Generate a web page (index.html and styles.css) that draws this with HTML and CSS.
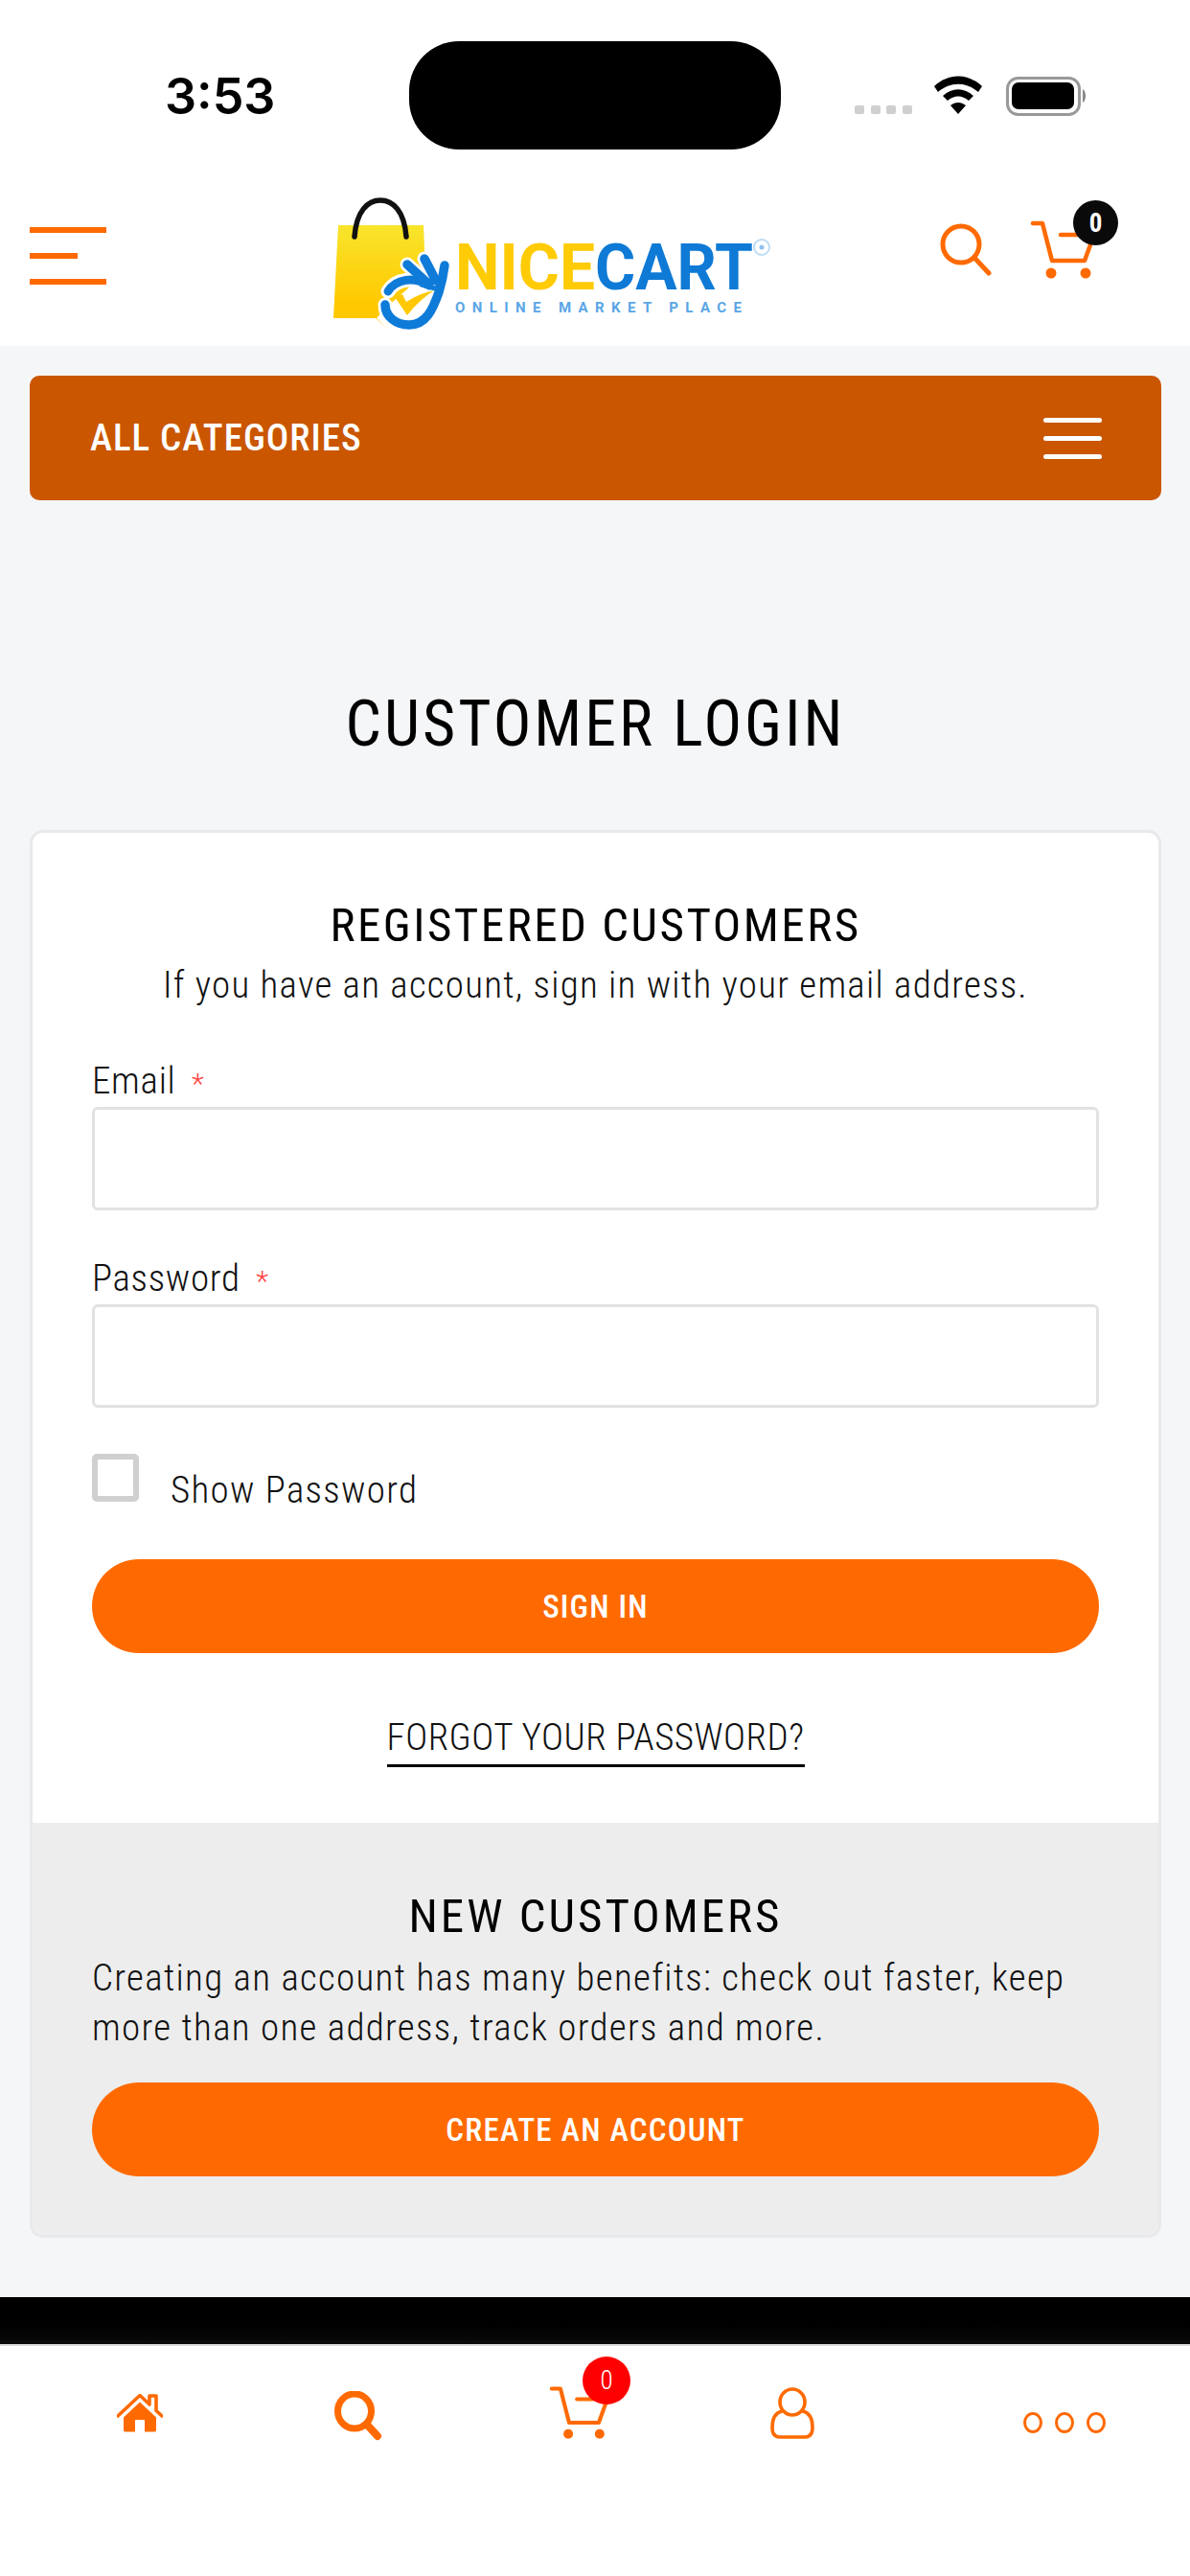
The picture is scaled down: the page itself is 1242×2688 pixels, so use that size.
FILE: index.html
```html
<!DOCTYPE html>
<html lang="en">
<head>
<meta charset="utf-8">
<title>Customer Login</title>
<link rel="stylesheet" href="styles.css">
</head>
<body>
<div class="top">
  <div class="status">
    <div class="time">3:53</div>
    <div class="island"></div>
    <svg class="status-icons" viewBox="880 70 260 60" width="260" height="60">
      <g fill="#cfcfcf">
        <rect x="892" y="110" width="10" height="9" rx="2"/>
        <rect x="909" y="110" width="10" height="9" rx="2"/>
        <rect x="925" y="110" width="10" height="9" rx="2"/>
        <rect x="942" y="110" width="10" height="9" rx="2"/>
      </g>
      <path d="M975 90 C990 76 1010 76 1025 90 L1021 96 C1008 85 992 85 979 96Z M984 100 C994 91 1006 91 1016 100 L1011 105 C1004 99 996 99 989 105Z M992 110 C997 106 1003 106 1008 110 L1000 119Z" fill="#000"/>
      <rect x="1051.5" y="81.5" width="75" height="38" rx="11" fill="none" stroke="#999" stroke-width="3"/>
      <rect x="1056" y="86" width="65" height="28" rx="7" fill="#000"/>
      <path d="M1130 93 C1134 95 1134 105 1130 107Z" fill="#888"/>
    </svg>
  </div>
  <div class="masthead">
    <div class="burger"><span class="b-long"></span><span class="b-short"></span><span class="b-long"></span></div>
    <svg class="logo" viewBox="340 205 480 145" width="480" height="145">
      <defs>
        <linearGradient id="bag" x1="0" y1="0" x2="0" y2="1">
          <stop offset="0" stop-color="#f8e52c"/>
          <stop offset="0.75" stop-color="#ffc800"/>
        </linearGradient>
      </defs>
      <path d="M353 235 H442 L444 285 L404 320 L393 332 L405 344 L392 332 H348Z" fill="url(#bag)"/>
      <path d="M370 247 C372 220 384 209 397 209 C410 209 422 220 424 247" fill="none" stroke="#111" stroke-width="5.500" stroke-linecap="round"/>
      <g fill="none" stroke-linecap="round" stroke-linejoin="round">
        <g stroke="#fff" stroke-width="15">
          <path d="M402 318 C402 331 414 339 427 339 C445 339 452 322 458 305 C461 295 463 285 464 277"/>
          <path d="M405 304 C413 291 432 288 448 298 M425 276 L447 296 M443 270 L455 293"/>
        </g>
        <g stroke="#0f7bd8" stroke-width="9.500">
          <path d="M402 318 C402 331 414 339 427 339 C445 339 452 322 458 305 C461 295 463 285 464 277"/>
          <path d="M425 276 L447 296 M443 270 L455 293"/>
        </g>
        <path d="M405 304 C413 291 432 288 448 298" stroke="#0f7bd8" stroke-width="9"/>
        <path d="M440 297 L458 302" stroke="#0f7bd8" stroke-width="5"/>
      </g>
      <path d="M412 310 L420 307 L424 315 C433 309 443 305 453 303 C441 311 432 320 425 329Z" fill="#ffc800"/>
      <text class="logo-word" x="475" y="302" fill="#ffcb05" textLength="146" lengthAdjust="spacingAndGlyphs">NICE</text>
      <text class="logo-word" x="621" y="302" fill="#0e7ad6" textLength="165" lengthAdjust="spacingAndGlyphs">CART</text>
      <text class="logo-sub" x="475" y="326" fill="#5aa6e6" textLength="299">ONLINE MARKET PLACE</text>
      <circle cx="795" cy="258" r="8" fill="none" stroke="#bcdcf5" stroke-width="2"/>
      <circle cx="795" cy="258" r="2.500" fill="#8fc3ee"/>
    </svg>
    <svg class="m-search" viewBox="980 230 56 60" width="56" height="60">
      <circle cx="1003" cy="255" r="19" fill="none" stroke="#ff6a00" stroke-width="5"/>
      <path d="M1017 269 L1032 285" stroke="#ff6a00" stroke-width="5" stroke-linecap="round"/>
    </svg>
    <div class="m-cart">
      <svg class="cart-icon" viewBox="1074 228 70 66" width="70" height="66">
        <path d="M1078 233 H1088 L1098 272 H1132 L1140 250 M1107 245 H1125" fill="none" stroke="#ff6a00" stroke-width="4.5" stroke-linecap="round" stroke-linejoin="round"/>
        <circle cx="1097" cy="285" r="5.5" fill="#ff6a00"/>
        <circle cx="1133" cy="285" r="5.5" fill="#ff6a00"/>
      </svg>
      <span class="badge badge-dark">0</span>
    </div>
  </div>
</div>

<main class="page">
  <div class="cats">
    <span class="cats-label">ALL CATEGORIES</span>
    <div class="cats-burger"><span></span><span></span><span></span></div>
  </div>
  <h1 class="title">CUSTOMER LOGIN</h1>
  <section class="card">
    <div class="registered">
      <h2 class="h2">REGISTERED CUSTOMERS</h2>
      <p class="sub">If you have an account, sign in with your email address.</p>
      <label class="lbl lbl-email">Email <span class="req">*</span></label>
      <div class="input"></div>
      <label class="lbl lbl-pass">Password <span class="req">*</span></label>
      <div class="input"></div>
      <div class="show">
        <span class="check"></span>
        <span class="show-text">Show Password</span>
      </div>
      <div class="btn btn-signin">SIGN IN</div>
      <div class="forgot-row"><a class="forgot">FORGOT YOUR PASSWORD?</a></div>
    </div>
    <div class="newc">
      <h2 class="h2 h2-new">NEW CUSTOMERS</h2>
      <p class="para">Creating an account has many benefits: check out faster, keep<br>more than one address, track orders and more.</p>
      <div class="btn btn-create">CREATE AN ACCOUNT</div>
    </div>
  </section>
</main>

<div class="footer-strip"></div>

<nav class="bottom">
  <svg class="n-home" viewBox="0 0 48 40" width="48" height="40">
    <path d="M1 23 L24 1.5 L34 11 V2 H41 V17.5 L47 23" fill="none" stroke="#ff6a00" stroke-width="3.6" stroke-linecap="round" stroke-linejoin="round"/>
    <path d="M24 8.5 L41 24.5 V38 Q41 39.500 39 39.500 H29 V27 H19 V39.500 H9 Q7 39.500 7 38 V24.500Z" fill="#ff6a00"/>
  </svg>
  <svg class="n-search" viewBox="0 0 50 52" width="50" height="52">
    <ellipse cx="21" cy="21" rx="17.500" ry="18" fill="none" stroke="#ff6a00" stroke-width="7"/>
    <path d="M34 35 L45 47" stroke="#ff6a00" stroke-width="8" stroke-linecap="round"/>
  </svg>
  <div class="n-cart">
    <svg class="cart-icon" viewBox="1074 228 70 66" width="64" height="60">
      <path d="M1078 233 H1088 L1098 272 H1132 L1140 250 M1107 245 H1125" fill="none" stroke="#ff6a00" stroke-width="4.5" stroke-linecap="round" stroke-linejoin="round"/>
      <circle cx="1097" cy="285" r="5.5" fill="#ff6a00"/>
      <circle cx="1133" cy="285" r="5.5" fill="#ff6a00"/>
    </svg>
    <span class="badge badge-red">0</span>
  </div>
  <svg class="n-user" viewBox="0 0 48 54" width="48" height="54">
    <ellipse cx="24" cy="15.500" rx="13" ry="13.500" fill="none" stroke="#ff6a00" stroke-width="3.600"/>
    <path d="M13 25 C5 27 3 34 3 42 C3 49 6 52 11 52 H37 C42 52 45 49 45 42 C45 34 43 27 35 25" fill="none" stroke="#ff6a00" stroke-width="3.600" stroke-linecap="round"/>
  </svg>
  <div class="n-more"><span></span><span></span><span></span></div>
</nav>
</body>
</html>
```

FILE: styles.css
```css
* { box-sizing: border-box; }
html, body { margin: 0; padding: 0; }
body {
  width: 1242px;
  height: 2688px;
  overflow: hidden;
  background: #f5f6f8;
  font-family: Roboto, "Liberation Sans", sans-serif;
  font-stretch: 75%;
  color: #111;
}
.top { background: #fff; height: 361px; }
.status { height: 180px; display: flex; }
.time {
  margin: 71px 0 0 172px;
  width: 255px;
  font-family: Inter, sans-serif;
  font-size: 52px;
  font-weight: 600;
  line-height: 60px;
  font-stretch: normal;
  color: #000;
}
.island { width: 388px; height: 113px; margin-top: 43px; background: #000; border-radius: 52px; }
.status-icons { margin: 70px 0 0 65px; display: block; }

.masthead { height: 181px; position: relative; display: flex; align-items: flex-start; }
.burger { width: 80px; margin: 57px 0 0 31px; display: flex; flex-direction: column; gap: 21px; }
.b-long, .b-short { display: block; height: 6px; background: #ff6a00; }
.b-short { width: 50px; }
.logo { display: block; margin: 25px 0 0 229px; }
.logo-word { font-family: Roboto, sans-serif; font-size: 66px; font-weight: 700; font-stretch: normal; }
.logo-sub { font-family: Roboto, sans-serif; font-size: 15px; font-weight: 700; font-stretch: normal; }
.m-search { display: block; margin: 50px 0 0 160px; }
.m-cart { position: relative; margin: 48px 0 0 38px; width: 70px; height: 66px; }
.cart-icon { display: block; }
.badge {
  position: absolute;
  display: flex;
  align-items: center;
  justify-content: center;
  border-radius: 50%;
  color: #fff;
}
.badge-dark { left: 46px; top: -19px; width: 47px; height: 47px; background: #0a0a0a; font-size: 27px; font-weight: 700; }
.badge-red { left: 36px; top: -29px; width: 50px; height: 50px; background: #f00; font-size: 27px; font-weight: 300; }

.page { padding: 31px 30px 0 31px; }
.cats {
  height: 130px;
  background: #ca5600;
  border-radius: 10px;
  padding: 0 62px 0 63px;
  display: flex;
  align-items: center;
  justify-content: space-between;
}
.cats-label { color: #fff; font-size: 39px; font-weight: 500; letter-spacing: 1px; }
.cats-burger { width: 61px; display: flex; flex-direction: column; gap: 14px; }
.cats-burger span { display: block; height: 5px; background: #fff; border-radius: 3px; }

.title {
  margin: 199px 0 0;
  text-align: center;
  font-size: 66px;
  line-height: 70px;
  font-weight: 400;
  letter-spacing: 3px;
  color: #000;
}
.card {
  margin-top: 75px;
  height: 1469px;
  background: #fff;
  border: 3px solid #e8e9eb;
  border-radius: 14px;
  overflow: hidden;
  display: flex;
  flex-direction: column;
}
.registered { height: 1033px; padding: 0 62px; }
.h2 { margin: 0; text-align: center; font-size: 49px; font-weight: 400; line-height: 60px; color: #000; }
.registered .h2 { padding-top: 67px; letter-spacing: 2.5px; }
.sub { margin: 0; text-align: center; font-size: 39px; line-height: 50px; font-weight: 300; letter-spacing: 1.25px; color: #111; padding-top: 7px; }
.lbl { display: block; font-size: 39px; font-weight: 300; line-height: 46px; letter-spacing: 0.7px; }
.lbl-email { margin-top: 52px; }
.lbl-pass { margin-top: 48px; }
.req { color: #f44; font-size: 30px; margin-left: 7px; }
.input { height: 108px; margin-top: 1px; border: 3px solid #e2e2e2; border-radius: 6px; background: #fff; }
.show { display: flex; margin-top: 48px; }
.check { width: 49px; height: 50px; border: 6px solid #d0d0d0; border-radius: 5px; }
.show-text { margin: 13px 0 0 33px; font-size: 39px; font-weight: 300; line-height: 50px; letter-spacing: 1.3px; }
.btn {
  height: 98px;
  background: #ff6a00;
  border-radius: 49px;
  color: #fff;
  font-size: 33px;
  font-weight: 500;
  letter-spacing: 1.2px;
  display: flex;
  align-items: center;
  justify-content: center;
}
.btn-signin { margin-top: 47px; }
.forgot-row { margin-top: 63px; display: flex; justify-content: center; }
.forgot { display: block; font-size: 39px; font-weight: 300; line-height: 50px; letter-spacing: 0.5px; color: #111; border-bottom: 3px solid #000; padding-bottom: 3px; }

.newc { flex: 1; background: #ededed; padding: 0 62px; }
.h2-new { padding-top: 68px; letter-spacing: 3px; }
.para { margin: 8px 0 0; font-size: 39px; font-weight: 300; line-height: 52px; letter-spacing: 1.3px; color: #111; }
.btn-create { margin-top: 31px; }

.footer-strip { margin-top: 62px; height: 49px; background: linear-gradient(#000 60%, #0b0b0b); }
.bottom {
  height: 242px;
  background: #fff;
  border-top: 2px solid #ddd;
  display: flex;
  align-items: flex-start;
}
.n-home { display: block; margin: 50px 0 0 122px; }
.n-search { display: block; margin: 47px 0 0 179px; }
.n-cart { position: relative; margin: 40px 0 0 173px; width: 70px; height: 66px; }
.n-user { display: block; margin: 43px 0 0 161px; }
.n-more { margin: 69px 0 0 217px; display: flex; gap: 13px; }
.n-more span { display: block; width: 20px; height: 22px; border: 3.500px solid #ff6a00; border-radius: 50%; }
```
